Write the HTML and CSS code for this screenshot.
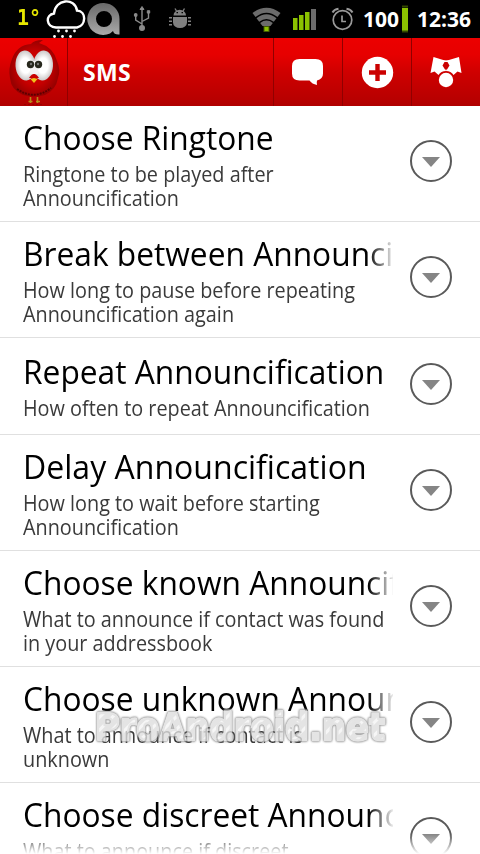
FILE: index.html
```html
<!DOCTYPE html>
<html lang="en">
<head>
<meta charset="utf-8">
<title>SMS</title>
<link rel="stylesheet" href="styles.css">
</head>
<body>
<div class="screen">
  <div class="status">
    <svg class="status-icons" width="480" height="38" viewBox="0 0 480 38">
      <g fill="none" stroke="#fff" stroke-width="2.4">
        <path d="M56 27.500C46 27 45 15 54 13.500C55 -1 75 -3 77 10.500C87 11 86 26 77 27.500Z"/>
      </g>
      <g fill="#fff"><circle cx="58.500" cy="31" r="1.400"/><circle cx="66.500" cy="31" r="1.400"/><circle cx="74.500" cy="31" r="1.400"/><circle cx="54.500" cy="36.500" r="1.400"/><circle cx="62.500" cy="36.500" r="1.400"/><circle cx="70.500" cy="36.500" r="1.400"/></g>
      <defs><linearGradient id="ag" x2="0" y2="1"><stop offset="0" stop-color="#686868"/><stop offset="1" stop-color="#aaa"/></linearGradient></defs>
      <path fill="url(#ag)" fill-rule="evenodd" d="M104 3A16 16 0 1 0 110 33.500L113 31Q114 35 119.500 34.500V19A16 16 0 0 0 104 3ZM104 11a8 8 0 1 1 0 16a8 8 0 1 1 0-16Z"/>
      <g fill="#8a8a8a" stroke="#8a8a8a" stroke-width="1.400">
        <path d="M142 8v20M142 24L135.700 20V15M142 21.500L148.500 18V12" fill="none"/>
        <path d="M142 6.500l-2 3h4zM147.300 10.700h2.400v2.400h-2.400z" stroke-width="1"/><circle cx="135.700" cy="15" r="1.200"/><circle cx="142" cy="28" r="2.300"/>
      </g>
      <g fill="#808080">
        <path d="M173.500 15.500a6 5.500 0 0 1 12.500 0zM173 17h14v5.500a7 5.500 0 0 1-14 0z"/>
        <path d="M169 17.800h3M169 21.300h3M169 24.800h3M188 17.800h3M188 21.300h3M188 24.800h3M176.500 11l-1.500-2.500M183 11l1.500-2.500" stroke="#808080" stroke-width="1.400"/>
        <path d="M176.500 12h1.500v1.300h-1.500zM181.500 12h1.500v1.300h-1.500z" fill="#000"/>
      </g>
      <path fill="#6c6c6c" d="M252.500 13Q266.500 2.500 280.500 13L277.500 17Q266.500 8.500 255.500 17ZM256.500 18.200Q266.500 10.500 276.500 18.200L273.800 21.700Q266.500 16.200 259.200 21.700ZM260.200 22.900Q266.500 18 272.800 22.900L270.500 26H262.500Z"/>
      <rect x="264" y="26.500" width="5" height="5" fill="#8bc200" stroke="#435b00"/>
      <path d="M293 18h4.500v12H293zM299 15h4.500v15H299zM305 12h4.500v18H305z" fill="#8bc200"/><path d="M311 9h5v21h-5z" fill="#6c6c6c"/>
      <g fill="none" stroke="#999" stroke-width="1.700"><circle cx="342.500" cy="20" r="9.300"/><path d="M342 15.500v6h4"/><path stroke-width="2" d="M332.500 12.500Q334 9.500 338.500 8.800M352.500 12.500Q351 9.500 346.500 8.800"/></g>
      <path d="M402 8h6v23h-6z" fill="#8bc200"/><path d="M402 6.500h6M402 31.500h6" stroke="#354900" stroke-width="2"/>
    </svg>
    <span class="temp">1°</span>
    <span class="batt">100</span>
    <span class="clock">12:36</span>
  </div>
  <header class="bar">
    <div class="logo">
      <svg width="67" height="68" viewBox="0 38 67 68">
        <defs><radialGradient id="bird"><stop offset="0" stop-color="#dc0000"/><stop offset=".6" stop-color="#c60000"/><stop offset="1" stop-color="#980000"/></radialGradient>
        <radialGradient id="eye"><stop offset=".5" stop-color="#fff"/><stop offset="1" stop-color="#ccc8c8"/></radialGradient></defs>
        <path fill="url(#bird)" d="M31 44Q34 40 43 40L39 43Q53 47 57 61Q61 70 58 78Q56 90 45 95Q34 98 23 95Q11 90 10 78Q8 69 12 59Q17 45 31 44Z"/>
        <path d="M17 89Q34 101 51 88" fill="none" stroke="#5c0000" stroke-width="2" stroke-dasharray="2 1"/>
        <ellipse cx="25.500" cy="65.500" rx="10" ry="15" transform="rotate(-4 25.500 65.500)" fill="url(#eye)"/><ellipse cx="43" cy="65.500" rx="10" ry="15" transform="rotate(4 43 65.500)" fill="url(#eye)"/><path d="M30 61h8v13h-8z" fill="#f4f2f2"/>
        <circle cx="30.500" cy="64.500" r="3.700" fill="#26271c"/><circle cx="38.500" cy="64.500" r="3.700" fill="#26271c"/><circle cx="31" cy="64" r="1.200" fill="#777"/><circle cx="38" cy="64" r="1.200" fill="#777"/>
        <path d="M29 78q5-8 10 0z" fill="#c90000"/><path d="M30.500 79l3.500-1 3.500 1-3.500 4z" fill="#efc21b"/>
        <path d="M30.500 97v6M37.500 97v6M28.500 101.500h4M36 101.500h4" stroke="#b98b1a" stroke-width="1.600"/><path d="M24 104.500h20" stroke="#900" stroke-dasharray="2 2"/>
      </svg>
    </div>
    <h1 class="bar-title">SMS</h1>
    <div class="action"><svg width="68" height="68" viewBox="274 38 68 68"><path fill="#fff" d="M299.500 59H315.500Q323 59 323 66V73.500Q323 79 317 80.500Q316.500 82 317 85Q312 84 309.500 80.500H299.500Q292 80.500 292 73.500V66Q292 59 299.500 59Z"/></svg></div>
    <div class="action"><svg width="68" height="68" viewBox="343 38 68 68"><circle cx="377.500" cy="72.500" r="15.700" fill="#fff"/><path d="M377.500 64v17M369 72.500h17" stroke="#cb0000" stroke-width="4.400"/></svg></div>
    <div class="action"><svg width="68" height="68" viewBox="412 38 68 68"><g fill="#fff"><path d="M433.500 57L446.500 61L443.500 63.500Q446 67 446 71Q441 71 438.500 75L434.500 71.500L430.500 73ZM459 57L445.500 61L448.500 63.500Q446 67 446 71Q451 71 453.500 75L457.500 71.500L461.500 73Z"/><path d="M443 60.500h6v4h-6z"/></g><circle cx="446" cy="80" r="8.200" fill="#cb0000"/><circle cx="446" cy="80" r="7.200" fill="#fff"/><path d="M444.500 62h3l2 3.500-2.500 4h-2l-2.500-4z" fill="#cb0000"/></svg></div>
  </header>
  <main class="list">
    <div class="row"><div class="text"><div class="title"><span>Choose Ringtone</span></div><p class="sub">Ringtone to be played after<br>Announcification</p></div><i class="more"></i></div>
    <div class="row"><div class="text"><div class="title fade"><span>Break between Announcification</span></div><p class="sub">How long to pause before repeating<br>Announcification again</p></div><i class="more"></i></div>
    <div class="row single"><div class="text"><div class="title"><span>Repeat Announcification</span></div><p class="sub">How often to repeat Announcification</p></div><i class="more"></i></div>
    <div class="row wide"><div class="text"><div class="title"><span>Delay Announcification</span></div><p class="sub">How long to wait before starting<br>Announcification</p></div><i class="more"></i></div>
    <div class="row"><div class="text"><div class="title fade"><span>Choose known Announcification</span></div><p class="sub">What to announce if contact was found<br>in your addressbook</p></div><i class="more"></i></div>
    <div class="row"><div class="text"><div class="title fade"><span>Choose unknown Announcification</span></div><p class="sub">What to announce if contact is<br>unknown</p></div><i class="more"></i></div>
    <div class="row"><div class="text"><div class="title fade"><span>Choose discreet Announcification</span></div><p class="sub">What to announce if discreet</p></div><i class="more"></i></div>
  </main>
  <div class="bottom-fade"></div>
  <svg class="watermark" width="310" height="50" viewBox="85 700 310 50">
    <defs><pattern id="stripes" width="9" height="9" patternUnits="userSpaceOnUse" patternTransform="rotate(45)"><rect width="9" height="9" fill="#dedede"/><rect width="3" height="9" fill="#f5f5f5"/></pattern></defs>
    <text x="95" y="739.500" textLength="290" lengthAdjust="spacingAndGlyphs">ProAndroid.net</text>
  </svg>
</div>
</body>
</html>
```
FILE: styles.css
```css
* { box-sizing: border-box; }
body { margin: 0; background: #fff; font-family: "Open Sans", "Noto Sans", sans-serif; }
.screen { position: relative; width: 480px; height: 854px; overflow: hidden; display: flex; flex-direction: column; }
.status { position: relative; flex: none; height: 38px; background: #000; color: #fff; font-weight: 700; font-size: 21px; line-height: 38px; }
.status-icons { display: block; }
.temp, .batt, .clock { position: absolute; top: 0; transform-origin: 0 50%; white-space: nowrap; }
.temp { left: 17px; top: -1px; color: #e8e800; font: 700 21px/38px "DejaVu Sans Mono", monospace; transform: scaleX(.95); }
.batt { left: 363px; }
.clock { left: 417px; }
.bar { flex: none; height: 68px; display: flex; background: linear-gradient(#ec0000, #e60000 25%, #cf0000 50%, #b80000 90%, #b00000); }
.bar svg { display: block; }
.logo { width: 68px; border-right: 1px solid #900000; }
.bar-title { flex: 1; margin: 0; padding-left: 15px; color: #fff; font-size: 23px; line-height: 69px; letter-spacing: .3px; }
.action { width: 69px; border-left: 1px solid #900000; }
.list { flex: none; }
.row { display: flex; align-items: center; min-height: 116px; padding: 12px 27px 11px 23px; border-bottom: 1px solid #e0e0e0; }
.row:last-child { align-items: flex-start; }
.text { width: 370px; flex: none; }
.title { height: 44px; line-height: 39px; font-size: 33px; color: #000; white-space: nowrap; overflow: hidden; }
.title span { display: inline-block; transform: scaleX(.961); transform-origin: 0 50%; }
.wide .title span { transform: scaleX(.971); }
.fade { -webkit-mask-image: linear-gradient(90deg, #000 345px, transparent 372px); mask-image: linear-gradient(90deg, #000 345px, transparent 372px); }
.sub { margin: 0; width: 400px; font-size: 21px; line-height: 24px; color: #3a3a3a; white-space: nowrap; transform: scaleX(.944); transform-origin: 0 50%; }
.more { flex: none; display: flex; align-items: center; justify-content: center; width: 42px; height: 42px; margin: -7px 0 0 17px; border: 2px solid #5a5a5a; border-radius: 50%; }
.single { min-height: 97px; padding-top: 11px; }
.single .more { margin-top: -4px; }
.row:last-child .more { margin-top: 22px; }
.more::before { content: ""; margin-top: 2px; border: 9px solid transparent; border-top: 10px solid #858585; border-bottom: 0; }
.bottom-fade { position: absolute; left: 0; right: 0; bottom: 0; height: 20px; background: linear-gradient(rgba(255,255,255,0), #fff); }
.watermark { position: absolute; left: 85px; top: 700px; opacity: .8; filter: drop-shadow(0 0 1px #777) drop-shadow(0 0 .5px #888); }
.watermark text { font: 700 37px "DejaVu Sans", sans-serif; fill: url(#stripes); stroke: #dedede; stroke-width: 2.4px; stroke-linejoin: round; }
```
